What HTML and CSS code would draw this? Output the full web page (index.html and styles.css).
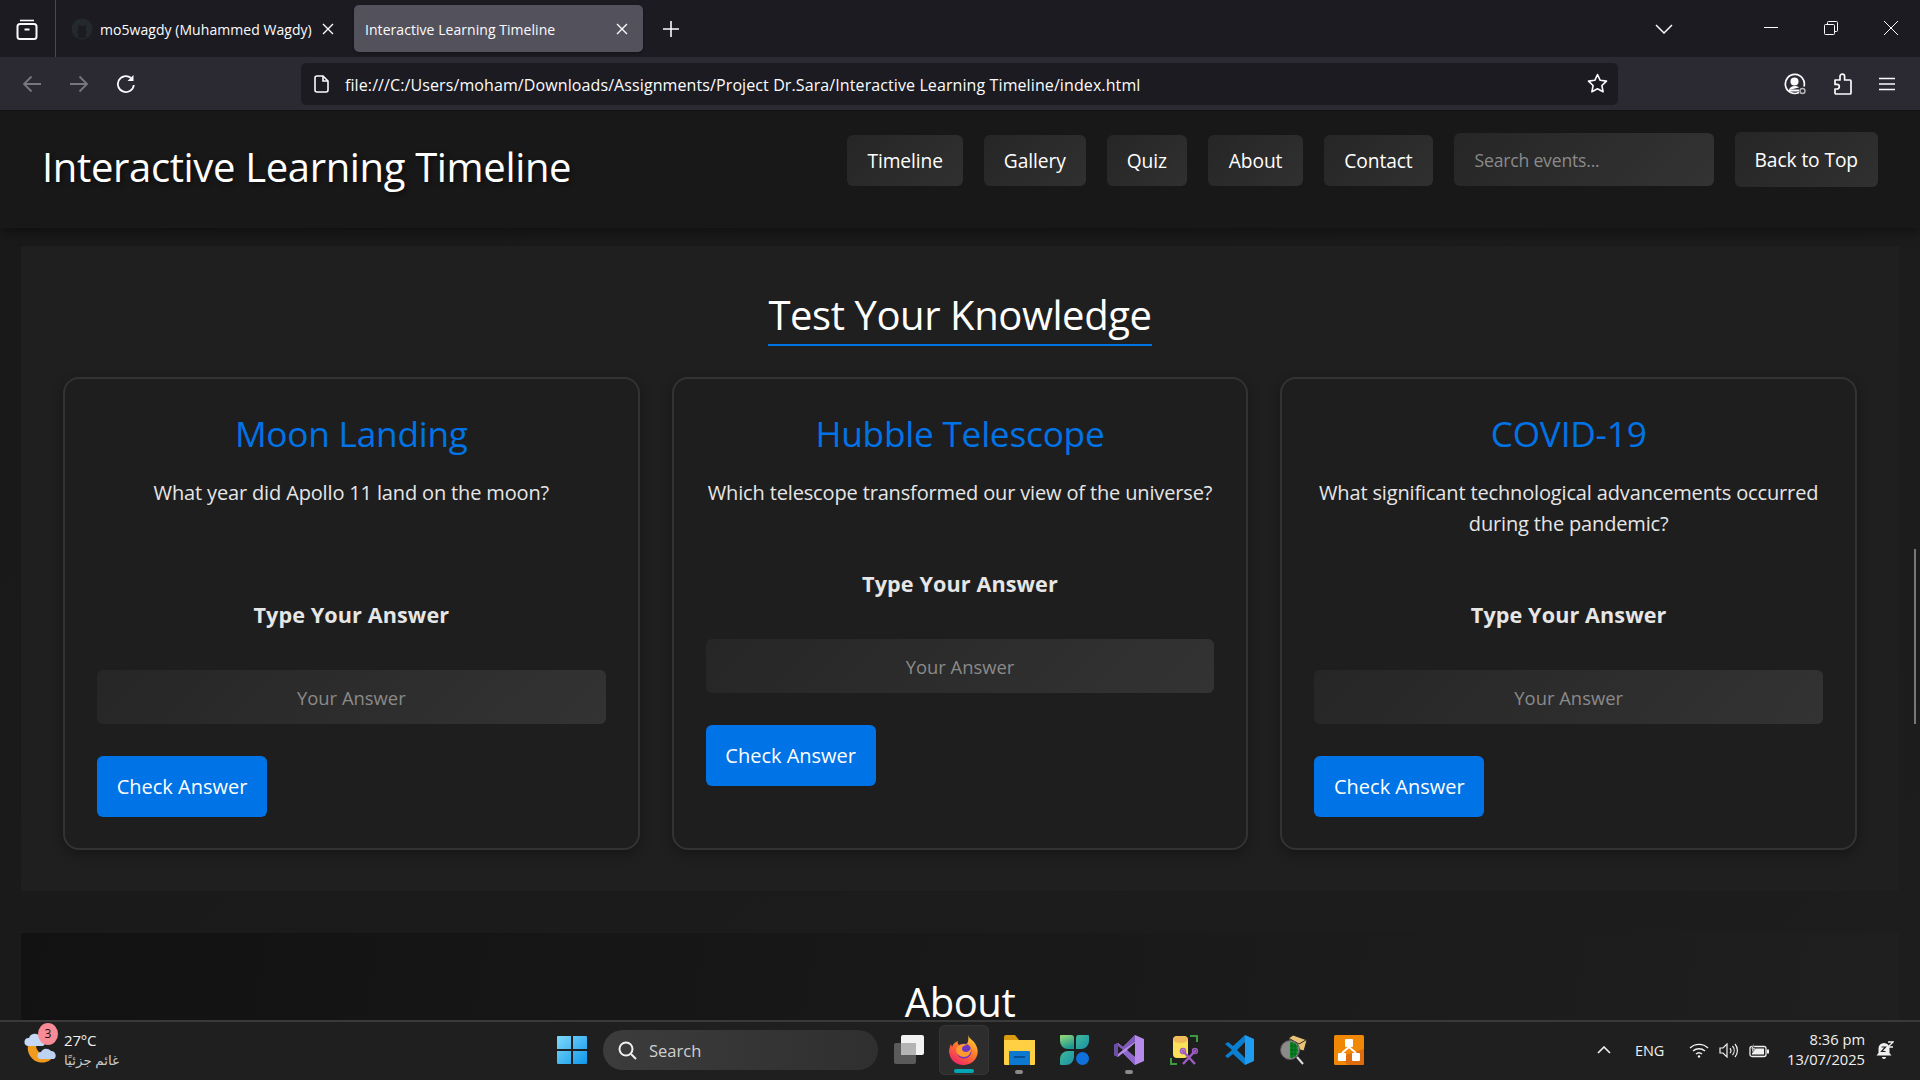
FILE: index.html
```html
<!DOCTYPE html>
<html lang="en">

<head>
    <meta charset="UTF-8">
    <meta name="viewport" content="width=device-width, initial-scale=1.0">
    <title>Interactive Learning Timeline</title>
    <link rel="stylesheet" href="styles.css">
</head>

<body>
    <!-- browser tabs -->
    <div class="tabbar">
        <div class="tab-manager">
            <svg width="22" height="22" viewBox="0 0 22 22" fill="none" stroke="#fbfbfe" stroke-width="2"><path d="M4 2.5h14" stroke-width="1.6"/><rect x="1.5" y="6" width="19" height="15" rx="2.5"/><path d="M8.5 11.5h5"/></svg>
        </div>
        <div class="tab">
            <svg class="tab-favicon" width="22" height="22" viewBox="0 0 22 22"><circle cx="11" cy="11" r="10.5" fill="#24292e"/><path d="M7 20v-4l-1-2 1-1V9l1-2 2 1h2l2-1 1 2v4l1 1-1 2v4z" fill="#1c1b22"/></svg>
            <span class="tab-title">mo5wagdy (Muhammed Wagdy)</span>
            <svg class="tab-close" width="12" height="12" viewBox="0 0 12 12" stroke="#fbfbfe" stroke-width="1.4"><path d="M1 1l10 10M11 1L1 11"/></svg>
        </div>
        <div class="tab tab-active">
            <span class="tab-title">Interactive Learning Timeline</span>
            <svg class="tab-close" width="12" height="12" viewBox="0 0 12 12" stroke="#fbfbfe" stroke-width="1.4"><path d="M1 1l10 10M11 1L1 11"/></svg>
        </div>
        <svg class="new-tab" width="16" height="16" viewBox="0 0 16 16" stroke="#fbfbfe" stroke-width="1.6"><path d="M8 0v16M0 8h16"/></svg>
        <svg class="tab-list" width="18" height="10" viewBox="0 0 18 10" fill="none" stroke="#fbfbfe" stroke-width="1.5"><path d="M1 1l8 8 8-8"/></svg>
        <div class="window-buttons">
            <svg width="14" height="14" viewBox="0 0 14 14" stroke="#fbfbfe" stroke-width="1"><path d="M0 6.5h14"/></svg>
            <svg width="14" height="14" viewBox="0 0 14 14" fill="none" stroke="#fbfbfe" stroke-width="1"><rect x="0.5" y="3.5" width="10" height="10" rx="1"/><path d="M3.5 3.5v-2a1 1 0 0 1 1-1h8a1 1 0 0 1 1 1v8a1 1 0 0 1-1 1h-2"/></svg>
            <svg width="14" height="14" viewBox="0 0 14 14" stroke="#fbfbfe" stroke-width="1"><path d="M0 0l14 14M14 0L0 14"/></svg>
        </div>
    </div>

    <!-- browser toolbar -->
    <div class="toolbar">
        <div class="nav-arrows">
            <svg width="20" height="18" viewBox="0 0 20 18" fill="none" stroke="#77767d" stroke-width="1.8"><path d="M19 9H2M9.5 1.5L2 9l7.5 7.5"/></svg>
            <svg width="20" height="18" viewBox="0 0 20 18" fill="none" stroke="#77767d" stroke-width="1.8"><path d="M1 9h17M10.500 1.500L18 9l-7.500 7.500"/></svg>
            <svg width="20" height="20" viewBox="0 0 20 20" fill="none" stroke="#fbfbfe" stroke-width="1.8"><path d="M17.800 11a8 8 0 1 1-3-7.200"/><path d="M17.500 1v6h-6z" fill="#fbfbfe" stroke="none"/></svg>
        </div>
        <div class="urlbar">
            <svg width="17" height="18" viewBox="0 0 17 18" fill="none" stroke="#fbfbfe" stroke-width="1.6"><path d="M2 3a2 2 0 0 1 2-2h6l5 5v9a2 2 0 0 1-2 2H4a2 2 0 0 1-2-2z"/><path d="M10 1v5h5"/></svg>
            <span class="url-text">file:///C:/Users/moham/Downloads/Assignments/Project Dr.Sara/Interactive Learning Timeline/index.html</span>
            <svg class="star" width="21" height="21" viewBox="0 0 21 21" fill="none" stroke="#fbfbfe" stroke-width="1.6" stroke-linejoin="round"><path d="M10.500 1.500l2.700 5.800 6.300.8-4.600 4.400 1.200 6.300-5.600-3.100-5.600 3.100 1.200-6.300L1.500 8.100l6.300-.8z"/></svg>
        </div>
        <div class="toolbar-icons">
            <svg width="22" height="22" viewBox="0 0 22 22" fill="none" stroke="#fbfbfe" stroke-width="1.7"><path d="M15 19.500a9.500 9.500 0 1 1 5-6"/><circle cx="10.500" cy="8.500" r="3.200" fill="#fbfbfe"/><path d="M5 17c1-3 3-4 5.500-4s3.500.5 4.500 1.500" fill="#fbfbfe" stroke="none"/><path d="M5 16.500h10v2H5z" fill="#fbfbfe" stroke="none"/><circle cx="18.500" cy="18" r="2.500" stroke="#b8b8bc" stroke-width="1.400"/></svg>
            <svg width="19" height="22" viewBox="0 0 19 22" fill="none" stroke="#fbfbfe" stroke-width="1.7" stroke-linejoin="round"><path d="M2 7h5V3.500a2.300 2.300 0 0 1 4.600 0V7H17a1 1 0 0 1 1 1v12a1 1 0 0 1-1 1H3a1 1 0 0 1-1-1v-4h2a2.300 2.300 0 0 0 0-4.600H2z"/></svg>
            <svg width="16" height="14" viewBox="0 0 16 14" stroke="#fbfbfe" stroke-width="1.6"><path d="M0 1.500h16M0 7h16M0 12.500h16"/></svg>
        </div>
    </div>

    <!-- the page -->
    <main class="viewport">
        <header class="site-header">
            <h1 class="site-title">Interactive Learning Timeline</h1>
            <nav class="site-nav">
                <a class="nav-link">Timeline</a>
                <a class="nav-link">Gallery</a>
                <a class="nav-link">Quiz</a>
                <a class="nav-link nav-wide">About</a>
                <a class="nav-link">Contact</a>
                <input class="search-box" type="text" placeholder="Search events...">
                <button class="back-top">Back to Top</button>
            </nav>
        </header>

        <section class="panel">
            <div class="panel-head"><h2 class="panel-title">Test Your Knowledge</h2></div>
            <div class="quiz-grid">
                <div class="quiz-card">
                    <h3 class="card-title">Moon Landing</h3>
                    <p class="question two-lines">What year did Apollo 11 land on the moon?</p>
                    <label class="answer-label">Type Your Answer</label>
                    <input class="answer-box" type="text" placeholder="Your Answer">
                    <button class="check-btn">Check Answer</button>
                </div>
                <div class="quiz-card">
                    <h3 class="card-title">Hubble Telescope</h3>
                    <p class="question">Which telescope transformed our view of the universe?</p>
                    <label class="answer-label">Type Your Answer</label>
                    <input class="answer-box" type="text" placeholder="Your Answer">
                    <button class="check-btn">Check Answer</button>
                </div>
                <div class="quiz-card">
                    <h3 class="card-title">COVID-19</h3>
                    <p class="question">What significant technological advancements occurred during the pandemic?</p>
                    <label class="answer-label">Type Your Answer</label>
                    <input class="answer-box" type="text" placeholder="Your Answer">
                    <button class="check-btn">Check Answer</button>
                </div>
            </div>
        </section>

        <section class="panel panel-dark">
            <div class="panel-head"><h2 class="panel-title plain">About</h2></div>
        </section>

        <div class="scroll-thumb"></div>
    </main>

    <!-- windows taskbar -->
    <footer class="taskbar">
        <div class="weather">
            <div class="weather-icon">
                <svg width="40" height="44" viewBox="0 0 40 44">
                    <path d="M4 17C2 28 12 37 22 34c4-1 7-4 8-8-9 4-18-1-18-9z" fill="#f09a1e"/>
                    <path d="M4 18a4 4 0 0 1 1-8 6 6 0 0 1 11-1 5 5 0 0 1 3 9z" fill="#c5d8f5"/>
                    <path d="M17 31a3.500 3.500 0 0 1 0-7 6 6 0 0 1 10-1 4.500 4.500 0 0 1 3 8z" fill="#bcd2f2"/>
                </svg>
                <span class="weather-badge">3</span>
            </div>
            <div class="weather-text">
                <span class="temp">27°C</span>
                <span class="condition" lang="ar">غائم جزئيًا</span>
            </div>
        </div>

        <div class="task-center">
            <svg class="start-icon" width="30" height="30" viewBox="0 0 30 30">
                <defs><linearGradient id="win" x1="0" y1="0" x2="1" y2="1"><stop offset="0" stop-color="#7fd9fb"/><stop offset="1" stop-color="#0f97ea"/></linearGradient></defs>
                <path d="M1 1h13v13H0V2a1 1 0 0 1 1-1zM16 1h13a1 1 0 0 1 1 1v12H16zM0 16h14v13H1a1 1 0 0 1-1-1zM16 16h14v12a1 1 0 0 1-1 1H16z" fill="url(#win)"/>
            </svg>
            <div class="task-search">
                <svg width="19" height="19" viewBox="0 0 19 19" fill="none" stroke="#f0f0f0" stroke-width="2"><circle cx="8" cy="8" r="6.500"/><path d="M13 13l5 5"/></svg>
                <span>Search</span>
            </div>
            <div class="task-apps">
                <div class="app">
                    <svg width="30" height="30" viewBox="0 0 30 30"><rect x="0" y="8" width="22" height="21" rx="2" fill="#5a5a5a"/><rect x="7" y="0" width="23" height="20" rx="2" fill="#f2f2f2"/><rect x="7" y="8" width="15" height="12" fill="#b4b4b4"/></svg>
                </div>
                <div class="app app-open">
                    <svg width="30" height="30" viewBox="0 0 30 30">
                        <defs>
                            <linearGradient id="fx" x1="0.8" y1="0" x2="0.2" y2="1"><stop offset="0" stop-color="#ffd53a"/><stop offset="0.45" stop-color="#ff7a2a"/><stop offset="1" stop-color="#f01f6a"/></linearGradient>
                        </defs>
                        <path d="M19 0c1 3 3 4 6 7 4 5 5 11 2 16-3 5-8 7-13 7C7 30 1 25 0 17c0-3 1-6 2-8l1 3c1-3 3-5 6-6-1 2 0 3 1 4 2-1 5-1 7-1 2 0 3-5 2-9z" fill="url(#fx)"/>
                        <circle cx="15" cy="16" r="7.500" fill="#6a34c4"/>
                        <path d="M8 12c3-3 7-4 11-2-3 0-6 1-6 4 0 2 2 3 4 3 3 0 5-3 5-5 1 5-2 10-7 10-4 0-8-3-8-7z" fill="#ff9a2e"/>
                    </svg>
                    <span class="app-bar"></span>
                </div>
                <div class="app">
                    <svg width="31" height="30" viewBox="0 0 31 30"><path d="M0 2a2 2 0 0 1 2-2h9l4 5H0z" fill="#d99b10"/><path d="M0 5h31v24a1 1 0 0 1-1 1H1a1 1 0 0 1-1-1z" fill="#ffd043"/><path d="M5 17a1 1 0 0 1 1-1h19a1 1 0 0 1 1 1v13H5z" fill="#0c78d0"/><path d="M10 22h11" stroke="#073f78" stroke-width="1.500"/></svg>
                    <span class="app-dot"></span>
                </div>
                <div class="app">
                    <svg width="29" height="30" viewBox="0 0 29 30">
                        <defs>
                            <linearGradient id="lf" x1="0" y1="0" x2="0.4" y2="1"><stop offset="0" stop-color="#9ddb78"/><stop offset="1" stop-color="#1a9a92"/></linearGradient>
                            <linearGradient id="lf2" x1="0" y1="0" x2="1" y2="1"><stop offset="0" stop-color="#3dbb9b"/><stop offset="1" stop-color="#1c8fa5"/></linearGradient>
                        </defs>
                        <path d="M1 0h10a3 3 0 0 1 3 3v11H8a8 8 0 0 1-8-8V1a1 1 0 0 1 1-1z" fill="url(#lf)"/>
                        <path d="M28 0H18a3 3 0 0 0-2 3v11h5a8 8 0 0 0 8-8V1a1 1 0 0 0-1-1z" fill="url(#lf2)"/>
                        <path d="M14 16H8a8 8 0 0 0-8 8v5a1 1 0 0 0 1 1h5a8 8 0 0 0 8-8z" fill="url(#lf2)"/>
                        <circle cx="22.500" cy="23.500" r="6.500" fill="#0f72dc"/>
                    </svg>
                </div>
                <div class="app">
                    <svg width="30" height="30" viewBox="0 0 30 30"><path d="M21 0l9 4v22l-9 4-12-12-5 4-4-2V10l4-2 5 4z" fill="#b58ae8"/><path d="M21 0l-12 12-5-4-4 2 4 2v0l5 3 12-8z" fill="#7e5bb8"/><path d="M0 10l4-2v14l-4-2z" fill="#6d4ea6"/><path d="M9 18l12 12 0-7-7-8z" fill="#8f66d0"/><path d="M21 8v14l-8-7z" fill="#1f1f1f"/><path d="M4 11l5 4-5 4z" fill="#1f1f1f"/></svg>
                    <span class="app-dot"></span>
                </div>
                <div class="app">
                    <svg width="28" height="30" viewBox="0 0 28 30"><rect x="3" y="1" width="15" height="22" rx="4" fill="#fbe05a"/><ellipse cx="10.500" cy="4.500" rx="7.500" ry="3.500" fill="#f0b95a"/><path d="M20 1h7v6M1 23v6h6" fill="none" stroke="#3c9c3c" stroke-width="2"/><path d="M12 15l13 14M26 15L13 29" stroke="#9c5cc4" stroke-width="2.500"/><circle cx="13" cy="16" r="2.500" fill="none" stroke="#9c5cc4" stroke-width="1.500"/><circle cx="25" cy="16" r="2.500" fill="none" stroke="#9c5cc4" stroke-width="1.500"/></svg>
                </div>
                <div class="app">
                    <svg width="30" height="30" viewBox="0 0 30 30"><path d="M21 0l-12 11L4 7l-3 2 7 6-7 6 3 2 5-4 12 11 0-7-8-8 8-8z" fill="#0a7fd0"/><path d="M21 0l9 4v22l-9 4z" fill="#1f9cf0"/></svg>
                </div>
                <div class="app">
                    <svg width="28" height="30" viewBox="0 0 28 30"><path d="M9 3l4-3 14 5-3 11-14-4z" fill="#e8c476" stroke="#222" stroke-width="1"/><path d="M10 4l9 5 7-4" fill="none" stroke="#222" stroke-width="1"/><circle cx="10" cy="15" r="9.500" fill="#8a8a8a" stroke="#555"/><path d="M10 7a8 8 0 0 1 0 16z" fill="#0c8a1c"/><path d="M12 7v16M15 8v14M10 11h8M10 15h8M10 19h8" stroke="#062" stroke-width="1"/><path d="M17 22l6 7" stroke="#ddd" stroke-width="2"/></svg>
                </div>
                <div class="app">
                    <svg width="30" height="30" viewBox="0 0 30 30"><rect width="30" height="30" rx="1.500" fill="#f08705"/><path d="M30 14v14a2 2 0 0 1-2 2H14L6 22z" fill="#df6c0c"/><rect x="11" y="4" width="8" height="8" rx="1" fill="#fff"/><rect x="4" y="18" width="8" height="8" rx="1" fill="#fff"/><rect x="18" y="18" width="8" height="8" rx="1" fill="#fff"/><path d="M15 12l-7 6M15 12l7 6" stroke="#fff" stroke-width="2"/></svg>
                </div>
            </div>
        </div>

        <div class="tray">
            <svg class="tray-up" width="14" height="8" viewBox="0 0 14 8" fill="none" stroke="#f0f0f0" stroke-width="1.600"><path d="M1 7l6-6 6 6"/></svg>
            <span class="tray-lang">ENG</span>
            <svg class="tray-wifi" width="20" height="15" viewBox="0 0 20 15" fill="none" stroke="#f0f0f0" stroke-width="1.400"><path d="M1 5a13 13 0 0 1 18 0M4 8a9 9 0 0 1 12 0M7 11a4.500 4.500 0 0 1 6 0"/><circle cx="10" cy="13.500" r="1.200" fill="#f0f0f0" stroke="none"/></svg>
            <svg class="tray-sound" width="20" height="15" viewBox="0 0 20 15" fill="none" stroke="#f0f0f0" stroke-width="1.200"><path d="M1 5h3l4-4v13l-4-4H1z"/><path d="M11 5a4 4 0 0 1 0 5M13.500 3a7 7 0 0 1 0 9M16 1a10 10 0 0 1 0 13"/></svg>
            <svg class="tray-battery" width="20" height="15" viewBox="0 0 20 15"><rect x="1" y="3.500" width="16" height="10" rx="2" fill="none" stroke="#f0f0f0" stroke-width="1.300"/><rect x="3" y="5.500" width="12" height="6" fill="#f0f0f0"/><rect x="18" y="6.500" width="2" height="4" fill="#f0f0f0"/><path d="M5 0L2 6h2.500L3 10l4-5H4.500z" fill="#f0f0f0" stroke="#1f1f1f" stroke-width="0.500"/></svg>
            <div class="clock">
                <span>8:36 pm</span>
                <span>13/07/2025</span>
            </div>
            <svg class="tray-bell" width="18" height="19" viewBox="0 0 18 19"><path d="M8 2a5.500 5.500 0 0 1 5.500 5.500V12l2 2.500H0.500L2.500 12V7.500A5.500 5.500 0 0 1 8 2z" fill="#f0f0f0"/><path d="M6 16h4a2 2 0 0 1-4 0z" fill="#f0f0f0"/><path d="M5.500 6h4l-4 4.500h4" fill="none" stroke="#1f1f1f" stroke-width="1.200"/><path d="M12 1h5l-5 5h5" fill="none" stroke="#f0f0f0" stroke-width="1.300"/></svg>
        </div>
    </footer>
</body>

</html>
```

FILE: styles.css
```css
* {
    box-sizing: border-box;
}

html,
body {
    height: 100%;
}

body {
    margin: 0;
    display: flex;
    flex-direction: column;
    overflow: hidden;
    background-color: #1a1a1a;
    font-family: "Open Sans", "DejaVu Sans", sans-serif;
    color: #f0f0f0;
}

svg {
    flex-shrink: 0;
    display: block;
}

/* browser tabs */
.tabbar {
    height: 57px;
    display: flex;
    align-items: center;
    background-color: #1c1b22;
    color: #fbfbfe;
    flex-shrink: 0;
}

.tab-manager {
    width: 56px;
    height: 57px;
    padding: 18px 0 0 16px;
    border-right: 1px solid #4a4950;
}

.tab {
    height: 47px;
    display: flex;
    align-items: center;
    font-size: 14px;
    letter-spacing: 0.05px;
    white-space: nowrap;
}

.tab:nth-child(2) {
    width: 298px;
    padding-left: 15px;
}

.tab-favicon {
    margin-right: 7px;
}

.tab-title {
    flex: 1;
    padding-top: 1px;
}

.tab-close {
    margin-right: 20px;
}

.tab-active {
    width: 289px;
    padding-left: 11px;
    background-color: #53525c;
    border-radius: 5px;
    box-shadow: 0 1px 3px rgba(0, 0, 0, 0.4);
}

.tab-active .tab-close {
    margin-right: 15px;
}

.new-tab {
    margin-left: 20px;
}

.tab-list {
    margin-left: 976px;
}

.window-buttons {
    display: flex;
    gap: 46px;
    margin-left: 91px;
    margin-top: -1px;
}

/* browser toolbar */
.toolbar {
    height: 54px;
    display: flex;
    align-items: center;
    background-color: #2b2a33;
    border-bottom: 1px solid #111;
    flex-shrink: 0;
}

.nav-arrows {
    width: 301px;
    display: flex;
    align-items: center;
    gap: 27px;
    padding-left: 22px;
}

.urlbar {
    width: 1317px;
    height: 42px;
    display: flex;
    align-items: center;
    padding: 0 10px 0 12px;
    background-color: #1c1b22;
    border-radius: 5px;
}

.url-text {
    flex: 1;
    margin-left: 15px;
    padding-top: 2px;
    font-size: 16px;
    letter-spacing: 0.1px;
    color: #fbfbfe;
    white-space: nowrap;
}

.toolbar-icons {
    display: flex;
    align-items: center;
    gap: 27px;
    margin-left: 166px;
}

/* page */
.viewport {
    flex: 1;
    position: relative;
    overflow: hidden;
    background: linear-gradient(135deg, #191919, #1d1d1d);
}

.site-header {
    height: 117px;
    display: flex;
    align-items: flex-start;
    justify-content: space-between;
    padding: 21px 42px 0;
    background-color: #181818;
    box-shadow: 0 4px 12px rgba(0, 0, 0, 0.4);
}

.site-title {
    margin: 7px 0 0;
    font-size: 40px;
    font-weight: 400;
    letter-spacing: -0.35px;
    color: #fff;
    text-shadow: 2px 2px 4px rgba(0, 0, 0, 0.5);
    white-space: nowrap;
}

.site-nav {
    display: flex;
    align-items: center;
    gap: 21px;
}

.nav-link,
.back-top {
    display: block;
    padding: 10px 20px;
    font-family: inherit;
    font-size: 19.2px;
    line-height: 31px;
    letter-spacing: -0.1px;
    color: #fff;
    background: linear-gradient(135deg, #262626, #303030);
    border: none;
    border-radius: 6px;
    white-space: nowrap;
}

.nav-link {
    margin-top: 1px;
}

.nav-wide {
    padding: 10px 21px;
}

.back-top {
    padding: 12px 20px;
}

.search-box {
    width: 260px;
    height: 53px;
    padding: 0 21px;
    font-family: inherit;
    font-size: 17.6px;
    letter-spacing: -0.2px;
    color: #fff;
    background: linear-gradient(135deg, #262626, #333);
    border: none;
    border-radius: 6px;
}

.search-box::placeholder,
.answer-box::placeholder {
    color: #8a8a8a;
    opacity: 1;
}

.panel {
    margin: 18px 21px 42px;
    padding: 43px 42px 41px;
    background-color: #1f1f1f;
}

.panel-dark {
    margin-top: 0;
    background: linear-gradient(100deg, #121212, #1f1f1f);
}

.panel-head {
    display: flex;
    justify-content: center;
    margin-bottom: 31px;
}

.panel-title {
    margin: 0;
    padding-bottom: 3px;
    font-size: 40px;
    font-weight: 400;
    line-height: 52px;
    letter-spacing: -0.43px;
    color: #fff;
    border-bottom: 2px solid #0073e6;
}

.panel-title.plain {
    border-bottom: none;
}

.quiz-grid {
    display: grid;
    grid-template-columns: repeat(3, 1fr);
    gap: 32px;
}

.quiz-card {
    padding: 32px 32px 31px;
    text-align: center;
    background-color: #1e1e1e;
    border: 2px solid #333;
    border-radius: 16px;
    box-shadow: 0 4px 12px rgba(0, 0, 0, 0.3);
}

.card-title {
    margin: 0 0 22px;
    font-size: 35.2px;
    font-weight: 400;
    line-height: 44px;
    letter-spacing: -0.2px;
    color: #0073e6;
}

.question {
    margin: 0 0 60px;
    font-size: 20px;
    line-height: 31px;
    letter-spacing: -0.15px;
    color: #e6e6e6;
}

.two-lines {
    min-height: 62px;
}

.answer-label {
    display: block;
    margin-bottom: 40px;
    font-size: 21.6px;
    font-weight: 700;
    line-height: 31px;
    letter-spacing: 0.1px;
    color: #e6e6e6;
}

.answer-box {
    display: block;
    width: 100%;
    height: 54px;
    margin-bottom: 32px;
    font-family: inherit;
    font-size: 18.4px;
    text-align: center;
    color: #fff;
    background: linear-gradient(135deg, #262626, #333);
    border: none;
    border-radius: 6px;
}

.check-btn {
    display: block;
    width: 170px;
    height: 61px;
    font-family: inherit;
    font-size: 20px;
    color: #fff;
    background-color: #0073e6;
    border: none;
    border-radius: 6px;
}

.scroll-thumb {
    position: absolute;
    top: 438px;
    right: 4px;
    width: 2px;
    height: 175px;
    background-color: #777;
}

/* taskbar */
.taskbar {
    height: 60px;
    display: flex;
    align-items: center;
    position: relative;
    padding-bottom: 2px;
    background-color: #1f1f1f;
    border-top: 2px solid #3a3a3a;
    flex-shrink: 0;
}

.weather {
    width: 557px;
    display: flex;
    align-items: center;
    padding-left: 24px;
}

.weather-icon {
    position: relative;
    width: 40px;
    height: 44px;
}

.weather-badge {
    position: absolute;
    top: -5px;
    left: 14px;
    width: 20px;
    height: 22px;
    border-radius: 50%;
    background-color: #f98b96;
    color: #111;
    font-size: 12px;
    line-height: 22px;
    text-align: center;
}

.weather-text {
    display: flex;
    flex-direction: column;
    margin-top: -1px;
    font-size: 15px;
    line-height: 20px;
    letter-spacing: -0.2px;
}

.condition {
    font-size: 13.5px;
    color: #c8c8c8;
    direction: rtl;
}

.task-center {
    display: flex;
    align-items: center;
}

.task-search {
    width: 275px;
    height: 40px;
    margin-left: 16px;
    display: flex;
    align-items: center;
    gap: 12px;
    padding-left: 15px;
    font-size: 16.5px;
    color: #d0d0d0;
    background: linear-gradient(90deg, #3c3c3c, #2f2f2f);
    border-radius: 20px;
}

.task-apps {
    display: flex;
    gap: 5px;
    margin-left: 6px;
}

.app {
    position: relative;
    width: 50px;
    height: 50px;
    display: flex;
    align-items: center;
    justify-content: center;
    border-radius: 6px;
}

.app-open {
    background-color: #2d2d2d;
    box-shadow: inset 0 0 0 1px #353535;
}

.app-bar {
    position: absolute;
    bottom: 2px;
    left: 15px;
    width: 20px;
    height: 4px;
    border-radius: 2px;
    background-color: #00a6b4;
}

.app-dot {
    position: absolute;
    bottom: 1px;
    left: 21px;
    width: 8px;
    height: 4px;
    border-radius: 2px;
    background-color: #8a8a8a;
}

.tray {
    display: flex;
    align-items: center;
    position: absolute;
    right: 26px;
    top: 0;
    height: 56px;
    color: #f0f0f0;
    font-size: 14.5px;
}

.tray-lang {
    margin-left: 24px;
    letter-spacing: -0.2px;
}

.tray-wifi {
    margin-left: 25px;
}

.tray-sound {
    margin-left: 10px;
}

.tray-battery {
    margin-left: 10px;
}

.clock {
    display: flex;
    flex-direction: column;
    align-items: flex-end;
    margin-top: -2px;
    margin-left: 18px;
    font-size: 14.7px;
    line-height: 20px;
}

.tray-bell {
    margin-left: 11px;
}
```
